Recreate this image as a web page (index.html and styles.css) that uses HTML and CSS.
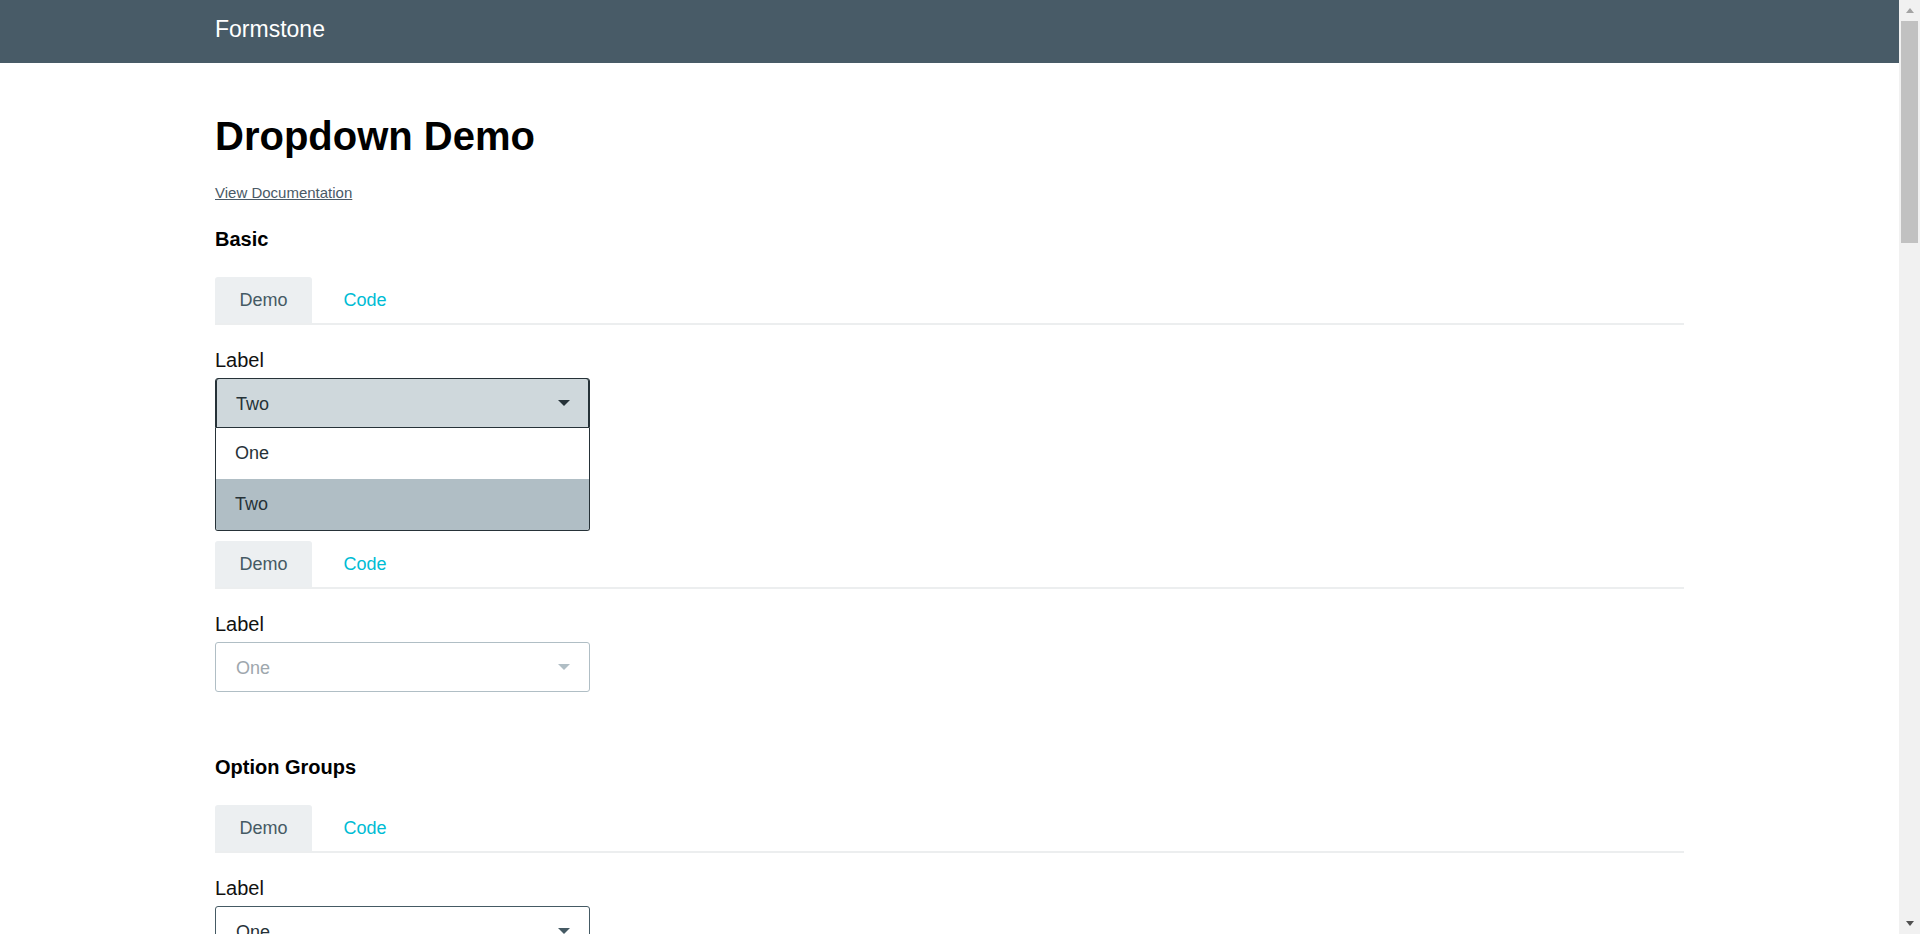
FILE: index.html
```html
<!DOCTYPE html>
<html lang="en">
<head>
<meta charset="utf-8">
<title>Dropdown Demo · Formstone</title>
<link rel="stylesheet" href="styles.css">
</head>
<body>
<div class="viewport">
  <div class="page">
    <header class="topbar">
      <div class="container">
        <span class="brand">Formstone</span>
      </div>
    </header>
    <main class="container content">
      <h1 class="title">Dropdown Demo</h1>
      <a class="doc-link" href="#">View Documentation</a>

      <section class="demo-section">
        <h2 class="section-title">Basic</h2>
        <div class="tabs">
          <span class="tab active">Demo</span>
          <span class="tab">Code</span>
        </div>
        <div class="panel">
          <span class="label">Label</span>
          <div class="dropdown open">
            <div class="dd-handle">
              <span class="dd-value">Two</span>
              <span class="caret"></span>
            </div>
            <ul class="dd-options">
              <li class="dd-item">One</li>
              <li class="dd-item selected">Two</li>
            </ul>
          </div>
        </div>
      </section>

      <section class="demo-section">
        <h2 class="section-title">Disabled</h2>
        <div class="tabs">
          <span class="tab active">Demo</span>
          <span class="tab">Code</span>
        </div>
        <div class="panel">
          <span class="label">Label</span>
          <div class="dropdown disabled">
            <div class="dd-handle">
              <span class="dd-value">One</span>
              <span class="caret"></span>
            </div>
          </div>
        </div>
      </section>

      <section class="demo-section">
        <h2 class="section-title">Option Groups</h2>
        <div class="tabs">
          <span class="tab active">Demo</span>
          <span class="tab">Code</span>
        </div>
        <div class="panel">
          <span class="label">Label</span>
          <div class="dropdown">
            <div class="dd-handle">
              <span class="dd-value">One</span>
              <span class="caret"></span>
            </div>
          </div>
        </div>
      </section>
    </main>
  </div>
  <div class="scrollbar">
    <div class="sb-btn"><span class="sb-up"></span></div>
    <div class="sb-thumb"></div>
    <div class="sb-track"></div>
    <div class="sb-btn"><span class="sb-down"></span></div>
  </div>
</div>
</body>
</html>
```

FILE: styles.css
```css
* { box-sizing: border-box; }

html, body {
  margin: 0;
  padding: 0;
  height: 100%;
  overflow: hidden;
}

body {
  font-family: "Liberation Sans", Arial, sans-serif;
  color: #000;
  background: #fff;
}

.viewport {
  display: flex;
  height: 934px;
}

.page {
  flex: 1;
  overflow: hidden;
}

.container {
  width: 1469px;
  margin: 0 auto;
}

/* Header */
.topbar {
  background: #485b67;
  height: 63px;
}

.brand {
  display: block;
  color: #fff;
  font-size: 23px;
  line-height: 25px;
  padding-top: 17px;
}

/* Content */
.content {
  padding-top: 49px;
}

.title {
  margin: 0;
  font-size: 40px;
  line-height: 48px;
  font-weight: bold;
  color: #000;
}

.doc-link {
  display: inline-block;
  margin-top: 23px;
  font-size: 15px;
  line-height: 20px;
  color: #4a5a66;
  text-decoration: underline;
}

.demo-section {
  margin-top: 24px;
}

.demo-section + .demo-section {
  margin-top: 63px;
}

.section-title {
  margin: 0 0 26px;
  font-size: 20px;
  line-height: 24px;
  font-weight: bold;
  color: #000;
}

/* Tabs */
.tabs {
  display: flex;
  gap: 7px;
  border-bottom: 2px solid #eceeef;
}

.tab {
  font-size: 18px;
  line-height: 46px;
  padding: 0 24.5px;
  color: #00bcd4;
  border-radius: 3px 3px 0 0;
}

.tab.active {
  background: #eceff1;
  color: #455a64;
}

/* Panel */
.panel {
  padding-top: 24px;
}

.label {
  display: block;
  font-size: 20px;
  line-height: 22px;
  margin-bottom: 7px;
  color: #111;
}

/* Dropdown */
.dropdown {
  position: relative;
  width: 375px;
}

.dd-handle {
  display: flex;
  align-items: center;
  justify-content: space-between;
  height: 50px;
  padding: 3px 19px 0 20px;
  border: 1px solid #455a64;
  border-radius: 3px;
  background: #fff;
  color: #263238;
  font-size: 18px;
  line-height: 45px;
}

.caret {
  width: 0;
  height: 0;
  border-left: 6px solid transparent;
  border-right: 6px solid transparent;
  border-top: 6px solid #455a64;
  margin-top: -3px;
}

.dropdown.open .dd-handle {
  background: #cfd8dc;
  border-color: #263238;
  border-radius: 3px 3px 0 0;
  box-shadow: inset 1px 0 0 #263238, inset -1px 0 0 #263238;
}

.dropdown.open .caret {
  border-top-color: #263238;
}

.dropdown.disabled .dd-handle {
  border-color: #b0bec5;
  color: #9ea7ad;
}

.dropdown.disabled .caret {
  border-top-color: #b0bec5;
}

.dd-options {
  position: absolute;
  top: 100%;
  left: 0;
  right: 0;
  margin: 0;
  padding: 0;
  list-style: none;
  background: #fff;
  border: 1px solid #263238;
  border-top: none;
  border-radius: 0 0 3px 3px;
  overflow: hidden;
  z-index: 5;
}

.dd-item {
  height: 51px;
  line-height: 51px;
  padding: 0 19px;
  font-size: 18px;
  color: #263238;
}

.dd-item.selected {
  background: #b0bec5;
}

/* Scrollbar */
.scrollbar {
  width: 21px;
  flex: none;
  background: #f1f1f1;
  display: flex;
  flex-direction: column;
}

.sb-btn {
  height: 21px;
  display: flex;
  align-items: center;
  justify-content: center;
  flex: none;
}

.sb-up {
  width: 0;
  height: 0;
  border-left: 4.5px solid transparent;
  border-right: 4.5px solid transparent;
  border-bottom: 5px solid #a3a3a3;
}

.sb-down {
  width: 0;
  height: 0;
  border-left: 4.5px solid transparent;
  border-right: 4.5px solid transparent;
  border-top: 5px solid #505050;
}

.sb-thumb {
  height: 222px;
  margin: 0 2px;
  background: #c1c1c1;
  flex: none;
}

.sb-track {
  flex: 1;
}
```
